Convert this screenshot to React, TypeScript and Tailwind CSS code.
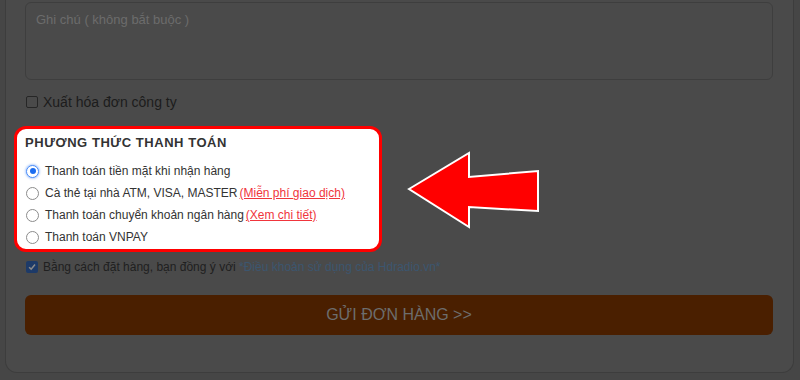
import React from 'react'

type Method = {
  label: string
  link?: string
  checked?: boolean
}

const methods: Method[] = [
  { label: 'Thanh toán tiền mặt khi nhận hàng', checked: true },
  { label: 'Cà thẻ tại nhà ATM, VISA, MASTER', link: '(Miễn phí giao dịch)' },
  { label: 'Thanh toán chuyển khoản ngân hàng', link: '(Xem chi tiết)' },
  { label: 'Thanh toán VNPAY' },
]

const Radio = ({ checked }: { checked?: boolean }) =>
  checked ? (
    <span className="flex h-[13px] w-[13px] items-center justify-center rounded-full border-[1.5px] border-[#4b8df8] bg-white shadow-[0_0_2px_1px_rgba(90,150,250,0.45)]">
      <span className="h-[6px] w-[6px] rounded-full bg-[#1a6cf0]" />
    </span>
  ) : (
    <span className="h-[13px] w-[13px] rounded-full border border-[#8c8c8c] bg-white" />
  )

const App = () => {
  return (
    <div
      className="relative h-[380px] w-[800px] overflow-hidden bg-[#464646]"
      style={{ fontFamily: '"Liberation Sans", Arial, sans-serif' }}
    >
      <div className="ml-[5px] w-[789px] rounded-b-[12px] border-x border-b border-[#3d3d3d] bg-[#4a4a4a] px-[19px] pb-[37px] pt-[2px]">
        {/* ghi chu */}
        <div className="h-[78px] w-[748px] rounded-[6px] border border-[#3e3e3e] px-[10px] pt-[7px] text-[13px] text-[#6c6c6c]">
          Ghi chú ( không bắt buộc )
        </div>

        <div className="mt-[14px] flex h-[16px] items-center gap-[5px]">
          <span className="ml-px h-[12px] w-[12px] rounded-[2px] border border-[#262626]" />
          <span className="text-[14px] text-[#1c1c1c]">Xuất hóa đơn công ty</span>
        </div>

        {/* payment */}
        <div className="-ml-[11px] mt-[16px] h-[126px] w-[368px] rounded-[12px] border-[3px] border-[#ff0000] bg-white pl-[8px] pt-[6px]">
          <div className="text-[13px] font-bold leading-[15px] tracking-[0.55px] text-[#333333]">
            PHƯƠNG THỨC THANH TOÁN
          </div>
          <div className="mt-[10px] flex flex-col">
            {methods.map((m) => (
              <div key={m.label} className="flex h-[22px] items-center gap-[6px] pl-px">
                <Radio checked={m.checked} />
                <span className="text-[12px] text-[#333333]">
                  {m.label}
                  {m.link && <span className="ml-[2px] text-[#f0353c] underline">{m.link}</span>}
                </span>
              </div>
            ))}
          </div>
        </div>

        <div className="mt-[7px] flex h-[16px] items-center gap-[5px]">
          <span className="ml-px flex h-[12px] w-[12px] items-center justify-center rounded-[2px] bg-[#1d3a68]">
            <svg viewBox="0 0 12 12" className="h-[10px] w-[10px]">
              <path d="M2.5 6.3 L5 8.6 L9.6 3" fill="none" stroke="#8a8a8a" strokeWidth="1.8" />
            </svg>
          </span>
          <span className="text-[12px] text-[#202020]">
            Bằng cách đặt hàng, bạn đồng ý với{' '}
            <span className="text-[#3c566f]">*Điều khoản sử dụng của Hdradio.vn*</span>
          </span>
        </div>

        <button className="mt-[20px] flex h-[40px] w-[748px] items-center justify-center rounded-[6px] bg-[#4a1f00] text-[16px] text-[#6d6d6d]">
          GỬI ĐƠN HÀNG &gt;&gt;
        </button>
      </div>

      {/* arrow */}
      <svg className="absolute left-0 top-0" width="800" height="380" viewBox="0 0 800 380">
        <polygon
          points="409,189 469,153 469,177 538,171 538,211 469,207 469,227"
          fill="#ff0000"
          stroke="#ffffff"
          strokeWidth="2"
          strokeLinejoin="miter"
        />
      </svg>
    </div>
  )
}

export default App
